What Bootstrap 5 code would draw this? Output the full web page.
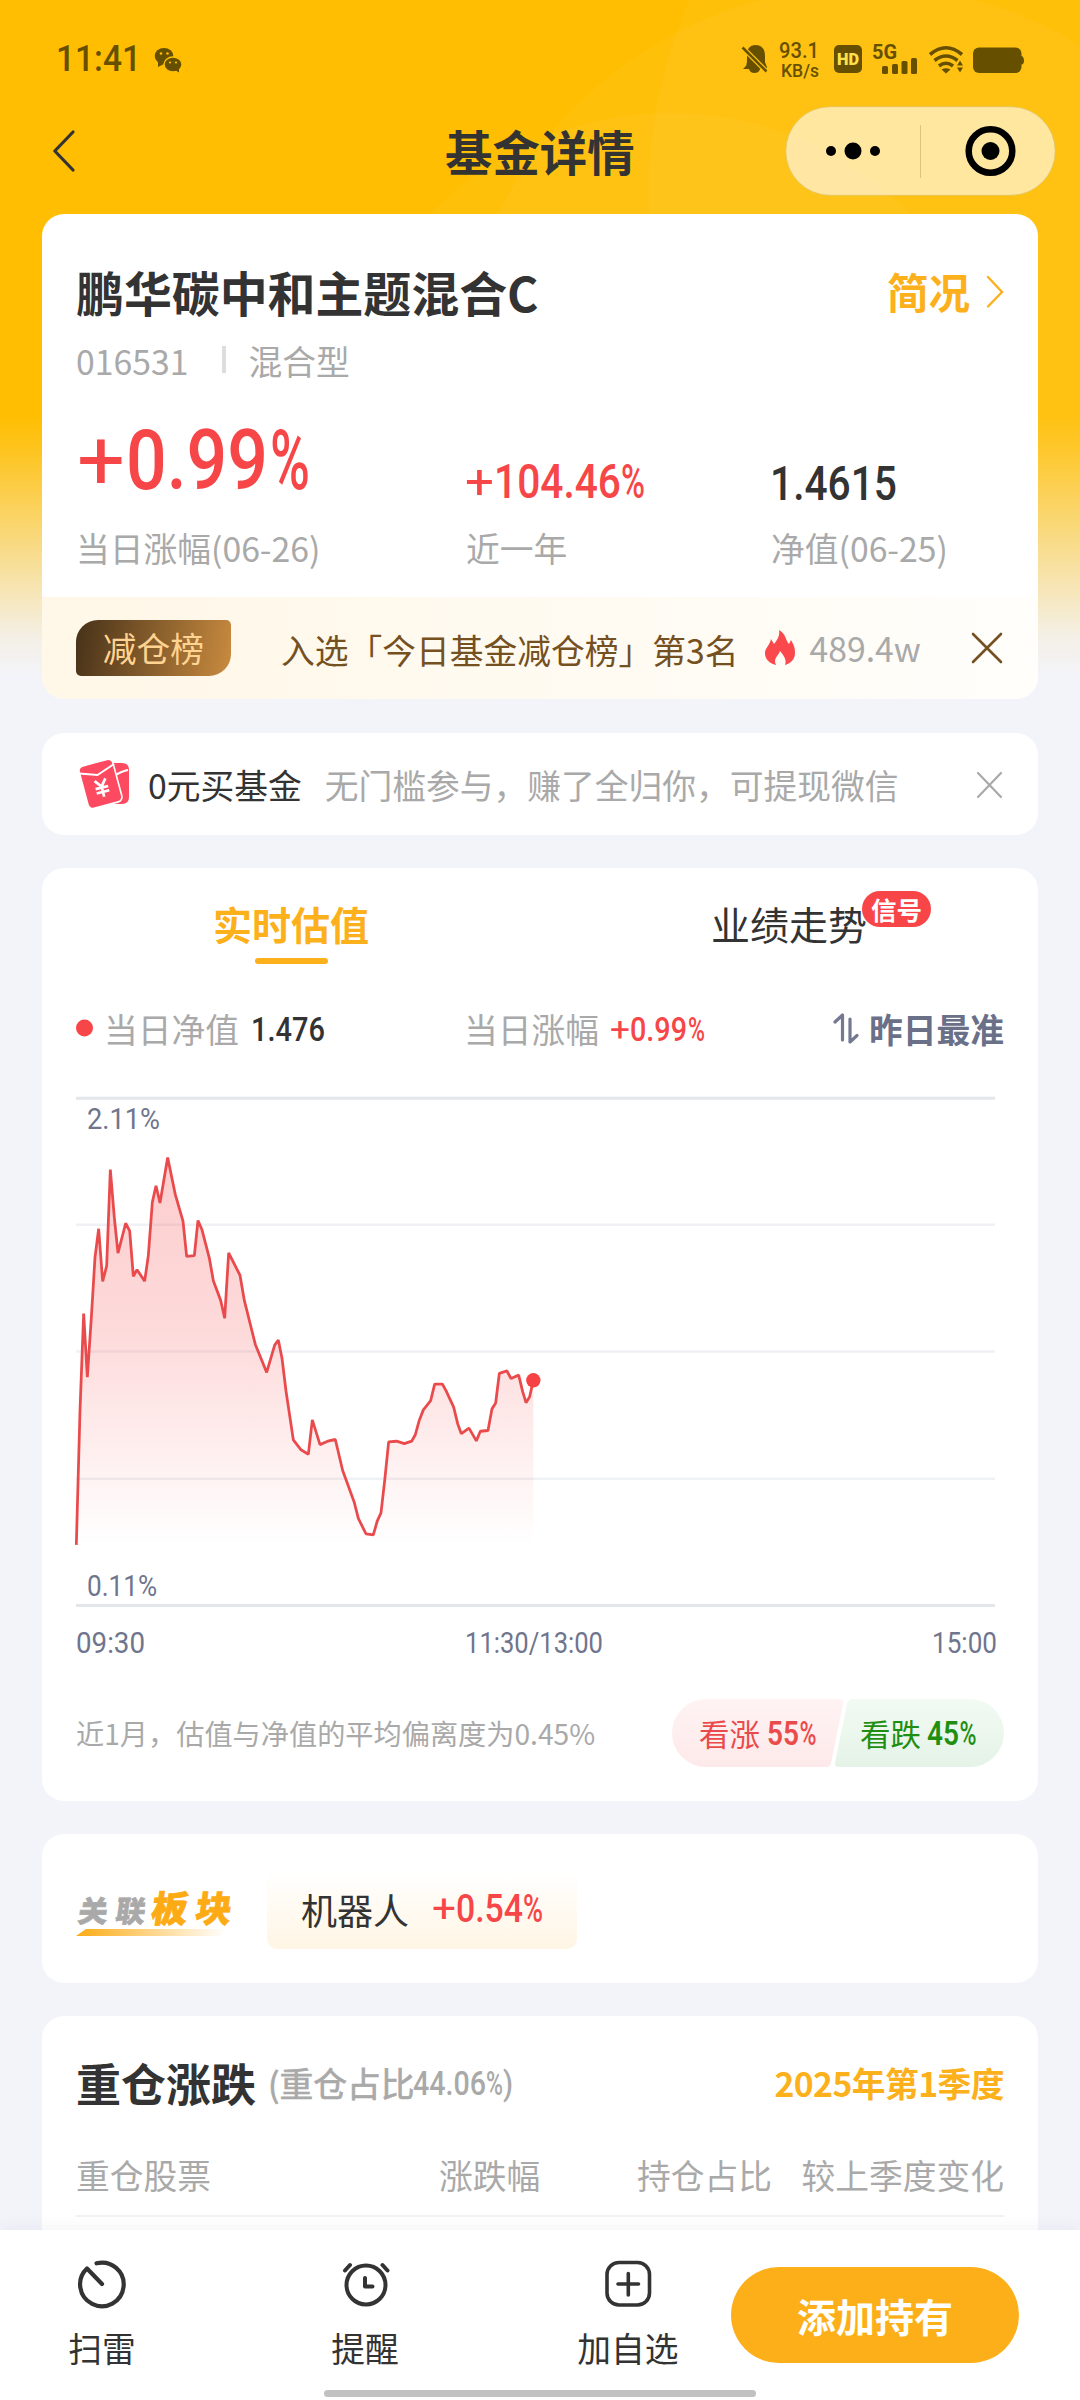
<!DOCTYPE html>
<html lang="zh-CN">
<head>
<meta charset="utf-8">
<meta name="viewport" content="width=device-width, initial-scale=1">
<title>基金详情</title>
<link href="https://cdn.jsdelivr.net/npm/bootstrap@5.3.0/dist/css/bootstrap.min.css" rel="stylesheet">
<style>
  body { background:#f3f4fa; font-family:"Noto Sans CJK SC",sans-serif; font-size:33.75px; line-height:48px; color:#333; letter-spacing:0; }
  svg { display:block; flex:none; overflow:visible; }
  svg text { font-family:Roboto,sans-serif; }
  .screen { width:1080px; height:2400px; overflow:hidden; position:relative; }
  .backdrop { position:absolute; left:0; top:0; overflow:hidden; }
  .page-body { position:relative; }
  .status-row { height:107px; padding:40px 54px 0 57px; }
  .title-row { height:88px; padding:0 24px 0 53px; }
  .page-title { font-size:47.4px; font-weight:700; line-height:60px; width:190px; margin-left:370px; margin-right:150px; white-space:nowrap; }
  .capsule { width:271px; height:90px; }
  .panel { background:#fff; border-radius:22px; margin:0 42px 33px; padding:0 34px; overflow:hidden; white-space:nowrap; }
  .panel-fund { margin-top:19px; margin-bottom:34px; height:485px; padding-top:47px; }
  .fund-name { font-size:47.9px; font-weight:700; line-height:60px; }
  .brief { font-size:41.5px; font-weight:700; color:#fcb01b; line-height:60px; gap:16px; }
  .muted { color:#a9a9a9; }
  .amber { color:#fcb01b; }
  .code-row { height:46px; margin-top:17px; }
  .code-sep { width:4px; height:27px; background:#ddd; margin:0 22px 4px 34px; }
  .col-a { width:390px; } .col-b { width:305px; }
  .strip { height:102px; margin:25px -34px 0; padding:0 34px; background:linear-gradient(90deg,#fff7e7,#fffefb); color:#755021; }
  .strip-tag { width:155px; height:56px; line-height:56px; border-radius:22px 5px 22px 5px; background:linear-gradient(100deg,#463119,#c98b3f); color:#ffd391; }
  .panel-promo { height:102px; }
  .panel-chart { height:933px; }
  .tab-row { height:98px; font-size:39px; line-height:56px; padding-top:27px; }
  .tab-on { width:390px; margin-left:20px; position:relative; font-weight:700; color:#fcb01b; }
  .tab-on::after { content:""; position:absolute; left:50%; top:63px; margin-left:-36.5px; width:73px; height:6px; border-radius:3px; background:#fcb01b; }
  .tab-off { width:390px; margin-left:108px; }
  .signal { position:absolute; left:151px; top:-4px; width:69px; height:36px; line-height:35px; border-radius:18px; background:#f74548; color:#fff; font-size:25.5px; font-weight:700; text-align:center; }
  .slate { color:#6b7089; font-weight:700; }
  .note { font-size:28.2px; }
  .vote { width:332px; height:68px; }
  .panel-sector { height:149px; }
  .sector-logo { width:158px; height:46px; margin-top:13px; }
  .sector-chip { margin:3px 0 0 33px; width:310px; height:78px; border-radius:11px; background:linear-gradient(180deg,#fff 0,#fff5e4 100%); font-size:36px; padding:0 34px 2px; }
  .panel-hold { height:260px; padding-top:42px; }
  .hold-title { font-size:45px; font-weight:700; line-height:50px; }
  .hold-share { margin-left:12px; -webkit-text-stroke:.7px #a9a9a9; }
  .quarter { letter-spacing:-.55px; }
  .hold-head { margin-top:43px; height:66px; border-bottom:2px solid #f0f3f6; }
  .dock { position:absolute; left:0; top:2230px; width:1080px; height:170px; background:#fff; box-shadow:0 -3px 14px rgba(60,70,100,.06); padding-left:42px; }
  .dock-item { width:120px; margin-right:143px; padding-top:28px; }
  .dock-item span { margin-top:14px; }
  .dock-item.last { margin-right:43px; }
  .add-btn { width:288px; height:96px; margin-top:37px; border-radius:48px; background:#fdaf19; color:#fff; font-size:39px; font-weight:700; line-height:92px; padding:0; border:0; }
  .home-bar { position:absolute; left:324px; bottom:3px; width:432px; height:7px; border-radius:4px; background:#c1c1c1; }
</style>
<script src="https://cdn.jsdelivr.net/npm/bootstrap@5.3.0/dist/js/bootstrap.bundle.min.js"></script>
</head>
<body>
<div class="screen">
  <svg class="backdrop" width="1080" height="676" viewBox="0 0 1080 676">
    <defs><linearGradient id="fade" x1="0" y1="0" x2="0" y2="1">
      <stop offset="0" stop-color="#f3f4fa" stop-opacity="0"/><stop offset=".12" stop-color="#f3f4fa" stop-opacity=".1"/><stop offset=".85" stop-color="#f3f4fa" stop-opacity=".92"/><stop offset="1" stop-color="#f3f4fa"/>
    </linearGradient></defs>
    <rect width="1080" height="676" fill="#ffbe02"/>
    <g fill="#fff" fill-opacity=".035"><circle cx="867" cy="399" r="413"/><circle cx="1109" cy="190" r="460"/><circle cx="670" cy="449" r="336"/></g>
    <rect y="415" width="1080" height="262" fill="url(#fade)"/>
  </svg>

  <div class="page-body">
    <div class="status-row d-flex justify-content-between">
      <div class="d-flex">
        <svg width="86" height="42" viewBox="57 40 86 42"><text x="56" y="71" font-size="36" font-weight="500" fill="#665000" textLength="85" lengthAdjust="spacingAndGlyphs">11:41</text></svg>
        <svg width="40" height="42" viewBox="143 40 40 42" fill="#665000">
          <ellipse cx="164" cy="56" rx="9.3" ry="8"/><path d="M158 61l0 6 6-3z"/>
          <ellipse cx="173" cy="64.5" rx="9" ry="7.5" stroke="#ffbe02" stroke-width="1.4"/><path d="M175 70l4 2.500 0-5z"/>
          <g fill="#ffbe02"><circle cx="161" cy="53.500" r="1.300"/><circle cx="167.500" cy="53.500" r="1.300"/><circle cx="170" cy="62.500" r="1.100"/><circle cx="176" cy="62.500" r="1.100"/></g>
        </svg>
      </div>
      <svg width="286" height="42" viewBox="740 40 286 42" fill="#665000">
        <path d="M745 67q2-2 2-6v-5q0-11 8-11q10 0 10 11v6q1 3 2 5v2h-7q-1 4-5.500 4t-5.500-4h-6z"/>
        <path d="M742.500 47.500L767 72" stroke="#ffc40a" stroke-width="5"/><path d="M742.500 47.500L766.500 71.500" stroke="#665000" stroke-width="2.500"/>
        <text x="779" y="58" font-size="21.500" font-weight="500" textLength="40" lengthAdjust="spacingAndGlyphs">93.1</text>
        <text x="781" y="77" font-size="18" font-weight="500" textLength="38" lengthAdjust="spacingAndGlyphs">KB/s</text>
        <rect x="834" y="45" width="28" height="28" rx="5"/>
        <text x="837" y="65" font-size="16.500" font-weight="900" fill="#ffe04a" textLength="22" lengthAdjust="spacingAndGlyphs">HD</text>
        <text x="872" y="59" font-size="20" font-weight="700" textLength="25" lengthAdjust="spacingAndGlyphs">5G</text>
        <rect x="882" y="66" width="6" height="8" rx="1.500"/><rect x="892" y="64" width="6" height="10" rx="1.500"/><rect x="901.500" y="61" width="6" height="13" rx="1.500"/><rect x="911" y="58" width="6" height="16" rx="1.500"/>
        <g fill="none" stroke="#665000" stroke-width="3.600"><path d="M930 54.500q16-13.500 32 0"/><path d="M934.500 60.500q11.500-9 23 0"/><path d="M939 66q7-5.500 14 0"/></g>
        <path d="M941.500 69.500q4.500-2.500 9 0L946 73.500z"/>
        <path d="M957 65.500l3-5 3 5zM957 67.500l3 5 3-5z"/>
        <rect x="973" y="47.500" width="48.500" height="25.500" rx="6"/><path d="M1021 56h1q2 1 2 4.500t-2 4h-1z"/>
      </svg>
    </div>

    <div class="title-row d-flex align-items-center">
      <svg width="22" height="42" viewBox="0 0 22 42" fill="none" stroke="#333" stroke-width="3.200" stroke-linecap="round" stroke-linejoin="round"><path d="M20 2L1.800 21 20 40"/></svg>
      <div class="page-title">基金详情</div>
      <svg class="capsule" viewBox="0 0 271 90">
        <rect x=".75" y=".75" width="269.500" height="88.500" rx="44.250" fill="#fff" fill-opacity=".6" stroke="#dcc269" stroke-opacity=".7"/>
        <circle cx="46" cy="45" r="5"/><circle cx="68" cy="45" r="8.500"/><circle cx="90" cy="45" r="5"/>
        <path d="M135.500 19v53" stroke="#d9c682"/>
        <circle cx="205.500" cy="45" r="21.800" fill="none" stroke="#000" stroke-width="6.500"/><circle cx="205.500" cy="45" r="9"/>
      </svg>
    </div>

    <section class="panel panel-fund">
      <div class="d-flex justify-content-between">
        <div class="fund-name">鹏华碳中和主题混合C</div>
        <div class="brief d-flex align-items-center">简况
          <svg width="18" height="32" viewBox="0 0 18 32" fill="none" stroke="#fcb01b" stroke-width="2.400" stroke-linecap="round"><path d="M2 2l14 15L2 31.500"/></svg></div>
      </div>
      <div class="code-row muted d-flex align-items-center">
        <span>016531</span><span class="code-sep"></span><span>混合型</span>
      </div>
      <div class="d-flex" style="margin-top:26px">
        <div class="col-a"><svg width="260" height="100" viewBox="76 410 260 100" fill="#f64648"><text x="77" y="489" font-size="84"><tspan textLength="48" lengthAdjust="spacingAndGlyphs">+</tspan><tspan x="126" font-weight="500" textLength="142" lengthAdjust="spacingAndGlyphs">0.99</tspan><tspan x="270" font-weight="500" textLength="40" lengthAdjust="spacingAndGlyphs">%</tspan></text></svg></div>
        <div class="col-b"><svg width="200" height="100" viewBox="466 410 200 100" fill="#f64648"><text x="465" y="498" font-size="49"><tspan textLength="29" lengthAdjust="spacingAndGlyphs">+</tspan><tspan x="494" font-weight="500" textLength="127" lengthAdjust="spacingAndGlyphs">104.46</tspan><tspan x="621" font-weight="500" textLength="24" lengthAdjust="spacingAndGlyphs">%</tspan></text></svg></div>
        <div><svg width="140" height="100" viewBox="771 410 140 100" fill="#333"><text x="770" y="500" font-size="49" font-weight="500" textLength="127" lengthAdjust="spacingAndGlyphs">1.4615</text></svg></div>
      </div>
      <div class="d-flex muted" style="margin-top:14px">
        <div class="col-a">当日涨幅(06-26)</div><div class="col-b">近一年</div><div>净值(06-25)</div>
      </div>
      <div class="strip d-flex align-items-center">
        <div class="strip-tag text-center">减仓榜</div>
        <div style="margin:4px 0 0 50px">入选「今日基金减仓榜」第3名</div>
        <svg width="30" height="36" viewBox="0 0 30 36" style="margin-left:27px"><path d="M14 0C22 5 20 10 24 14l2-4c3 5 4 8 4 13 0 6-4 10-10 12 2-5-1-9-5-14-1 3-5 7-5 10q0 2 1 4C4 33 0 29 0 23c0-5 5-8 6-14l3 5C13 9 15 5 14 0z" fill="#fa484c"/></svg>
        <div class="muted" style="margin-left:14px">489.4w</div>
        <svg class="ms-auto" width="32" height="32" viewBox="0 0 32 32" stroke="#755021" stroke-width="2.600" stroke-linecap="round"><path d="M1 2l28 28M29 2L1 30"/></svg>
      </div>
    </section>

    <section class="panel panel-promo d-flex align-items-center">
      <svg width="55" height="50" viewBox="0 0 55 50">
        <path d="M30 4h16q7 0 7 7v27q0 7-7 7H20z" fill="#fe4a60"/>
        <path d="M38 17q8-5 14-6" stroke="#fff" stroke-width="2" fill="none"/>
        <rect x="7" y="3" width="35" height="44" rx="5" transform="rotate(-15 24 25)" fill="#fe4a60" stroke="#fff" stroke-width="1.600"/>
        <path d="M3 14.500L21.500 16 38 5" stroke="#fff" stroke-width="2" fill="none"/>
        <g transform="rotate(-14 26 29)" stroke="#fff" stroke-width="2.700" fill="none"><path d="M20.500 20.500l5.500 7 5.500-7M26 27v11M19.500 28.500h13M19.500 33h13"/></g>
      </svg>
      <div style="margin:1px 0 0 17px">0元买基金</div>
      <div class="muted" style="margin:1px 0 0 23px">无门槛参与，赚了全归你，可提现微信</div>
      <svg class="ms-auto" width="28" height="28" viewBox="0 0 28 28" stroke="#a9a9a9" stroke-width="2.200" stroke-linecap="round"><path d="M2 3l23 24M25 3L2 27"/></svg>
    </section>

    <section class="panel panel-chart">
      <div class="tab-row d-flex">
        <div class="tab-on text-center">实时估值</div>
        <div class="tab-off text-center"><span class="position-relative d-inline-block">业绩走势<span class="signal">信号</span></span></div>
      </div>
      <div class="d-flex align-items-center" style="height:126px">
        <div class="d-flex align-items-center col-a">
          <svg width="18" height="18"><circle cx="8.500" cy="8" r="8.500" fill="#f64648"/></svg>
          <span class="muted" style="margin-left:10px">当日净值</span>
          <svg width="90" height="48" viewBox="238 1005 90 48"><text x="250" y="1040.500" font-size="34" font-weight="500" fill="#333" textLength="74" lengthAdjust="spacingAndGlyphs">1.476</text></svg>
        </div>
        <span class="muted" style="margin-left:-2px">当日涨幅</span>
        <svg width="110" height="48" viewBox="598 1005 110 48" fill="#f64648"><text x="609" y="1040.500" font-size="34"><tspan textLength="20" lengthAdjust="spacingAndGlyphs">+</tspan><tspan x="629" font-weight="500" textLength="57" lengthAdjust="spacingAndGlyphs">0.99</tspan><tspan x="687" font-weight="500" textLength="17" lengthAdjust="spacingAndGlyphs">%</tspan></text></svg>
        <svg class="ms-auto" width="26" height="32" viewBox="0 0 26 32" fill="none" stroke="#747991" stroke-width="3.200" stroke-linecap="round" stroke-linejoin="round"><path d="M2 9l7.500-7v25M17 6v23l7-6.500"/></svg>
        <span class="slate" style="margin-left:10px">昨日最准</span>
      </div>

      <svg width="928" height="570" viewBox="0 0 928 570" style="margin-top:4px">
        <defs><linearGradient id="area" x1="0" y1="0" x2="0" y2="1"><stop offset="0" stop-color="#f64648" stop-opacity=".27"/><stop offset=".45" stop-color="#f64648" stop-opacity=".2"/><stop offset="1" stop-color="#f64648" stop-opacity="0"/></linearGradient></defs>
        <path d="M0 2.300h919M0 509.500h919" stroke="#e3e6eb" stroke-width="3"/>
        <path d="M0 128.700h919M0 255.400h919M0 382.800h919" stroke="#eff1f5" stroke-width="2.500"/>
        <g transform="translate(-16 -16) scale(.33333 .34435)">
          <path fill="url(#area)" d="M49 1350L60 960 71 678 82 863 94 690 105 515 116 432 128 585 140 540 151 260 163 400 174 503 197 416 209 438 220 570 231 551 254 584 265 510 277 355 288 307 300 357 323 225 346 333 369 410 380 512 403 510 414 408 426 435 448 517 460 583 482 640 494 692 506 502 540 567 553 640 586 768 620 849 644 770 655 755 666 808 678 903 700 1045 723 1074 745 1087 757 987 780 1059 803 1049 826 1044 848 1134 883 1227 895 1273 918 1318 940 1321 952 1280 963 1257 975 1155 986 1051 1010 1049 1033 1056 1055 1049 1066 1030 1078 988 1090 958 1112 931 1124 883 1147 883 1158 902 1181 950 1193 998 1204 1027 1227 1011 1249 1048 1261 1020 1284 1018 1296 955 1307 938 1318 852 1341 845 1353 867 1376 857 1388 905 1398 937 1409 920 1420 872V1350z"/>
          <path fill="none" stroke="#e94b4d" stroke-width="8.300" stroke-linejoin="bevel" d="M49 1350L60 960 71 678 82 863 94 690 105 515 116 432 128 585 140 540 151 260 163 400 174 503 197 416 209 438 220 570 231 551 254 584 265 510 277 355 288 307 300 357 323 225 346 333 369 410 380 512 403 510 414 408 426 435 448 517 460 583 482 640 494 692 506 502 540 567 553 640 586 768 620 849 644 770 655 755 666 808 678 903 700 1045 723 1074 745 1087 757 987 780 1059 803 1049 826 1044 848 1134 883 1227 895 1273 918 1318 940 1321 952 1280 963 1257 975 1155 986 1051 1010 1049 1033 1056 1055 1049 1066 1030 1078 988 1090 958 1112 931 1124 883 1147 883 1158 902 1181 950 1193 998 1204 1027 1227 1011 1249 1048 1261 1020 1284 1018 1296 955 1307 938 1318 852 1341 845 1353 867 1376 857 1388 905 1398 937 1409 920 1420 872"/>
          <ellipse cx="1420" cy="872" rx="21.500" ry="21" fill="#f64245"/>
        </g>
        <g font-size="30" fill="#6f758d">
          <text x="11" y="33" textLength="73" lengthAdjust="spacingAndGlyphs">2.11%</text>
          <text x="11" y="499.500" textLength="70" lengthAdjust="spacingAndGlyphs">0.11%</text>
          <text x="0" y="556.700" textLength="69" lengthAdjust="spacingAndGlyphs">09:30</text>
          <text x="389" y="556.700" textLength="138" lengthAdjust="spacingAndGlyphs">11:30/13:00</text>
          <text x="856" y="556.700" textLength="65" lengthAdjust="spacingAndGlyphs">15:00</text>
        </g>
      </svg>

      <div class="d-flex align-items-center justify-content-between" style="margin-top:33px">
        <div class="note muted">近1月，估值与净值的平均偏离度为0.45%</div>
        <svg class="vote" viewBox="0 0 332 68">
          <defs>
            <linearGradient id="up" x1="0" y1="0" x2="0" y2="1"><stop stop-color="#fff3f3"/><stop offset="1" stop-color="#fde9ea"/></linearGradient>
            <linearGradient id="down" x1="0" y1="0" x2="0" y2="1"><stop stop-color="#f2faf3"/><stop offset="1" stop-color="#e5f3e7"/></linearGradient>
          </defs>
          <path fill="url(#up)" d="M34 0H167q5 0 4 5L159 64q-1 4-5 4H34A34 34 0 0 1 34 0z"/>
          <path fill="url(#down)" d="M181 0H298a34 34 0 0 1 0 68H167q-5 0-4-4L175 5q1-5 6-5z"/>
          <g fill="#ea4a4b"><text x="27" y="47" font-size="30.500" style="font-family:'Noto Sans CJK SC',sans-serif">看涨</text><text x="95" y="46" font-size="33" font-weight="600"><tspan textLength="32" lengthAdjust="spacingAndGlyphs">55</tspan><tspan x="127.500" font-weight="500" textLength="17" lengthAdjust="spacingAndGlyphs">%</tspan></text></g>
          <g fill="#1f8f12"><text x="188" y="47" font-size="30.500" style="font-family:'Noto Sans CJK SC',sans-serif">看跌</text><text x="255" y="46" font-size="33" font-weight="600"><tspan textLength="32" lengthAdjust="spacingAndGlyphs">45</tspan><tspan x="287.500" font-weight="500" textLength="17" lengthAdjust="spacingAndGlyphs">%</tspan></text></g>
        </svg>
      </div>
    </section>

    <section class="panel panel-sector d-flex align-items-center">
      <svg class="sector-logo" viewBox="76 1892 158 46">
        <defs><linearGradient id="swoosh"><stop stop-color="#fcab14"/><stop offset="1" stop-color="#fcab14" stop-opacity="0"/></linearGradient></defs>
        <g transform="translate(0 1922) skewX(-8)" style="font-weight:900">
          <text x="77" y="0" font-size="29.500" fill="#a9a9a9" stroke="#a9a9a9" stroke-width=".6" textLength="67" lengthAdjust="spacing" style="font-family:'Noto Sans CJK SC',sans-serif">关联</text>
          <text x="150" y="0" font-size="36" fill="#fcab14" stroke="#fcab14" stroke-width=".8" textLength="80" lengthAdjust="spacing" style="font-family:'Noto Sans CJK SC',sans-serif">板块</text>
        </g>
        <path d="M86 1929H226l-6 7H76z" fill="url(#swoosh)"/>
      </svg>
      <div class="sector-chip d-flex align-items-center">机器人
        <svg width="126" height="48" viewBox="424 1886 126 48" fill="#f64648" style="margin-left:15px"><text x="432" y="1923" font-size="39"><tspan textLength="24" lengthAdjust="spacingAndGlyphs">+</tspan><tspan x="456" font-weight="500" textLength="67" lengthAdjust="spacingAndGlyphs">0.54</tspan><tspan x="523" font-weight="500" textLength="20" lengthAdjust="spacingAndGlyphs">%</tspan></text></svg>
      </div>
    </section>

    <section class="panel panel-hold">
      <div class="d-flex align-items-center" style="height:50px">
        <span class="hold-title">重仓涨跌</span>
        <span class="hold-share muted">(重仓占比</span>
        <svg width="104" height="48" viewBox="413 2060 104 48" fill="#a9a9a9"><text x="412" y="2096" font-size="33"><tspan font-weight="500" textLength="73" lengthAdjust="spacingAndGlyphs">44.06</tspan><tspan x="485" font-weight="500" textLength="17" lengthAdjust="spacingAndGlyphs">%</tspan><tspan x="502" font-weight="500" textLength="10" lengthAdjust="spacingAndGlyphs">)</tspan></text></svg>
        <span class="quarter amber fw-bold ms-auto">2025年第1季度</span>
      </div>
      <div class="hold-head d-flex muted">
        <span style="width:363px">重仓股票</span><span style="width:198px">涨跌幅</span><span>持仓占比</span><span class="ms-auto">较上季度变化</span>
      </div>
    </section>
  </div>

  <nav class="dock d-flex">
    <div class="dock-item d-flex flex-column align-items-center">
      <svg width="52" height="52" viewBox="0 0 52 52" fill="none" stroke="#333" stroke-width="4.200" stroke-linecap="round" stroke-linejoin="round"><path d="M20.500 5.300A21.800 21.800 0 1 1 11 10.500L26 26"/></svg>
      <span>扫雷</span>
    </div>
    <div class="dock-item d-flex flex-column align-items-center">
      <svg width="52" height="52" viewBox="0 0 52 52" fill="none" stroke="#333" stroke-width="4" stroke-linecap="round" stroke-linejoin="round"><circle cx="27" cy="27" r="19.500"/><path d="M26 20v8.500h7.500M6 12.500l5-5.500M43.500 7l5 5.500"/></svg>
      <span>提醒</span>
    </div>
    <div class="dock-item last d-flex flex-column align-items-center">
      <svg width="52" height="52" viewBox="0 0 52 52" fill="none" stroke="#333" stroke-width="3.600" stroke-linecap="round"><rect x="5" y="4.500" width="42.500" height="42.500" rx="12"/><path d="M26.300 15.500v21.500M16 26h20.500"/></svg>
      <span>加自选</span>
    </div>
    <button class="btn add-btn" type="button">添加持有</button>
    <div class="home-bar"></div>
  </nav>
</div>
</body>
</html>
